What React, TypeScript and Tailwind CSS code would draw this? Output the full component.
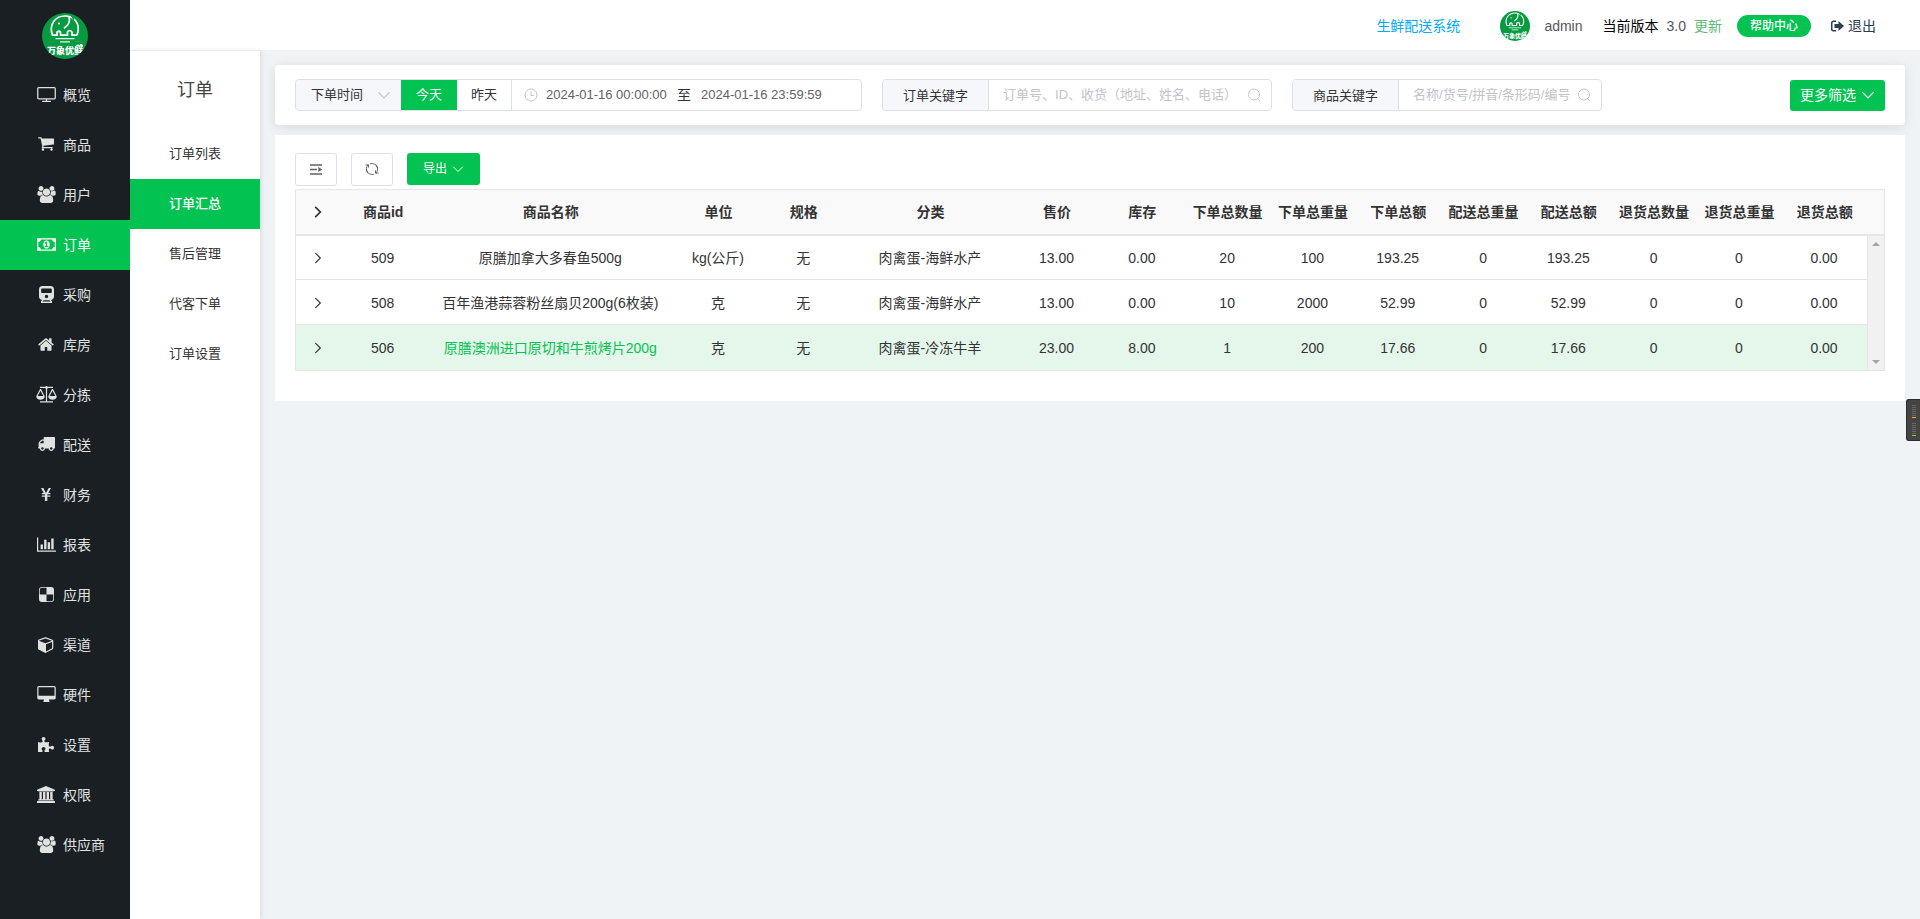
import { useState, type ReactNode } from "react";

type GlyphProps = { viewBox: string; className?: string; children: ReactNode };

function Glyph({ viewBox, className, children }: GlyphProps) {
  return (
    <svg viewBox={viewBox} className={className} fill="currentColor" aria-hidden="true">
      {children}
    </svg>
  );
}

const PEOPLE =
  "M657 896q-162 5-265 128h-134q-82 0-138-40.5t-56-118.5q0-353 124-353 6 0 43.5 21t97.5 42.5 119 21.5q67 0 133-23-5 37-5 66 0 159 93 293zm1071 637q0 120-73 189.5t-194 69.5h-874q-121 0-194-69.5t-73-189.5q0-53 3.5-103.5t14-109 26.5-108.5 43-97.5 62-81 85.5-53.5 111.5-20q10 0 43 21.5t73 48 107 48 135 21.5 135-21.5 107-48 73-48 43-21.5q61 0 111.5 20t85.5 53.5 62 81 43 97.5 26.5 108.5 14 109 3.5 103.5zm-1024-1277q0 106-75 181t-181 75-181-75-75-181 75-181 181-75 181 75 75 181zm704 384q0 159-112.5 271.5t-271.5 112.5-271.5-112.5-112.5-271.5 112.5-271.5 271.5-112.5 271.5 112.5 112.5 271.5zm576 225q0 78-56 118.5t-138 40.5h-134q-103-123-265-128 93-134 93-293 0-29-5-66 66 23 133 23 59 0 119-21.5t97.5-42.5 43.5-21q124 0 124 353zm-128-609q0 106-75 181t-181 75-181-75-75-181 75-181 181-75 181 75 75 181z";

const people = (
  <Glyph viewBox="64 0 1920 1792" className="h-[17px] w-[19px]">
    <path d={PEOPLE} />
  </Glyph>
);

const MENU: { label: string; icon: ReactNode }[] = [
  {
    label: "概览",
    icon: (
      <Glyph viewBox="0 128 1920 1536" className="h-[15px] w-[19px]">
        <path d="M1792 288v960q0 13-9.5 22.5t-22.5 9.5h-1600q-13 0-22.5-9.5t-9.5-22.5v-960q0-13 9.5-22.5t22.5-9.5h1600q13 0 22.5 9.5t9.5 22.5zm128 960v-960q0-66-47-113t-113-47h-1600q-66 0-113 47t-47 113v960q0 66 47 113t113 47h736v128h-352q-14 0-23 9t-9 23v64q0 14 9 23t23 9h832q14 0 23-9t9-23v-64q0-14-9-23t-23-9h-352v-128h736q66 0 113-47t47-113z" />
      </Glyph>
    ),
  },
  {
    label: "商品",
    icon: (
      <Glyph viewBox="64 256 1664 1408" className="h-[14px] w-[16px]">
        <path d="M704 1536q0 52-38 90t-90 38-90-38-38-90 38-90 90-38 90 38 38 90zm896 0q0 52-38 90t-90 38-90-38-38-90 38-90 90-38 90 38 38 90zm128-1088v512q0 24-16.5 42.5t-40.5 21.5l-1044 122q13 60 13 70 0 16-24 64h920q26 0 45 19t19 45-19 45-45 19h-1024q-26 0-45-19t-19-45q0-11 8-31.5t16-36 21.5-40 15.5-29.5l-177-823h-204q-26 0-45-19t-19-45 19-45 45-19h256q16 0 28.5 6.5t19.5 15.5 13 24.5 8 26 5.5 29.5 4.5 26h1201q26 0 45 19t19 45z" />
      </Glyph>
    ),
  },
  { label: "用户", icon: people },
  {
    label: "订单",
    icon: (
      <Glyph viewBox="0 0 1920 1280" className="h-[13px] w-[19px]">
        <path d="M768 896h384v-96h-128v-448h-114l-148 137 77 80q42-37 55-57h2v288h-128v96zm512-256q0 70-21 142t-59.5 134-101.5 101-138 39-138-39-101.5-101-59.5-134-21-142 21-142 59.5-134 101.5-101 138-39 138 39 101.5 101 59.5 134 21 142zm512 256v-512q-106 0-181-75t-75-181h-1152q0 106-75 181t-181 75v512q106 0 181 75t75 181h1152q0-106 75-181t181-75zm128-832v1152q0 26-19 45t-45 19h-1792q-26 0-45-19t-19-45v-1152q0-26 19-45t45-19h1792q26 0 45 19t19 45z" />
      </Glyph>
    ),
  },
  {
    label: "采购",
    icon: (
      <Glyph viewBox="0 0 15 17" className="h-[17px] w-[15px]">
        <path
          fillRule="evenodd"
          d="M3.5 0h8A3.5 3.5 0 0 1 15 3.5v7a3.5 3.5 0 0 1-3 3.4L13.300 16H13v1H2v-1h-.3L3 13.900a3.500 3.500 0 0 1-3-3.400v-7A3.500 3.500 0 0 1 3.500 0ZM3 2.500a.8.800 0 0 0-.8.800v2.900c0 .4.300.800.800.800h9c.4 0 .8-.4.800-.8V3.300a.8.800 0 0 0-.8-.8H3Zm4.500 6.300a1.700 1.700 0 1 0 0 3.400 1.700 1.700 0 0 0 0-3.400ZM4.500 14.200l-1 1.400h8l-1-1.400h-6Z"
        />
      </Glyph>
    ),
  },
  {
    label: "库房",
    icon: (
      <Glyph viewBox="64 253 1664 1283" className="h-[13px] w-[16px]">
        <path d="M1472 992v480q0 26-19 45t-45 19h-384v-384h-256v384h-384q-26 0-45-19t-19-45v-480q0-1 .5-3t.5-3l575-474 575 474q1 2 1 6zm223-69l-62 74q-8 9-21 11h-3q-13 0-21-7l-692-577-692 577q-12 8-24 7-13-2-21-11l-62-74q-8-10-7-23.5t11-21.5l719-599q32-26 76-26t76 26l244 204v-195q0-14 9-23t23-9h192q14 0 23 9t9 23v408l219 182q10 8 11 21.500t-7 23.500z" />
      </Glyph>
    ),
  },
  {
    label: "分拣",
    icon: (
      <Glyph viewBox="0 0 21 17" className="h-[17px] w-[21px]">
        <path d="M10.500 0a1.300 1.300 0 0 1 1.200.8H17v1.200h-5.200a1.500 1.500 0 0 1-.7.7v12.500H17v1.300H4v-1.300h5.900V2.700a1.500 1.500 0 0 1-.7-.7H4V.8h5.300A1.300 1.300 0 0 1 10.500 0Z" />
        <path
          fillRule="evenodd"
          d="M4 3h1l3.700 7.200c.2 2-1.700 3.500-4.200 3.500S.1 12.200.3 10.200L4 3Zm.5 1.800L1.700 10h5.600L4.500 4.800ZM16 3h1l3.700 7.200c.2 2-1.700 3.500-4.200 3.500s-4.400-1.500-4.200-3.500L16 3Zm.5 1.800L13.700 10h5.600l-2.800-5.200Z"
        />
      </Glyph>
    ),
  },
  {
    label: "配送",
    icon: (
      <Glyph viewBox="64 256 1728 1408" className="h-[14px] w-[17px]">
        <path d="M640 1408q0-52-38-90t-90-38-90 38-38 90 38 90 90 38 90-38 38-90zm-384-512h384v-256h-158q-13 0-22 9l-195 195q-9 9-9 22v30zm1280 512q0-52-38-90t-90-38-90 38-38 90 38 90 90 38 90-38 38-90zm256-1088v1024q0 15-4 26.500t-13.500 18.500-16.500 11.500-23.500 6-22.500 2-25.500 0-22.500-.5q0 106-75 181t-181 75-181-75-75-181h-384q0 106-75 181t-181 75-181-75-75-181h-64q-3 0-22.500.5t-25.500 0-22.500-2-23.500-6-16.500-11.500-13.500-18.500-4-26.500q0-26 19-45t45-19v-320q0-8-.5-35t0-38 2.500-34.500 6.500-37 14-30.500 22.500-30l198-198q19-19 50.500-32t58.500-13h160v-192q0-26 19-45t45-19h1024q26 0 45 19t19 45z" />
      </Glyph>
    ),
  },
  {
    label: "财务",
    icon: (
      <Glyph viewBox="0 0 10 13" className="h-[13px] w-[10px]">
        <path d="M0 0h2.300L5 4.900 7.700 0H10L7.300 5H9.400v1.300H6.300v1.200h3.100v1.300H6.300V13H3.900V8.800H.8V7.500h3.100V6.300H.8V5h1.900L0 0Z" />
      </Glyph>
    ),
  },
  {
    label: "报表",
    icon: (
      <Glyph viewBox="0 128 2048 1536" className="h-[15px] w-[19px]">
        <path d="M640 896v512h-256v-512h256zm384-512v1024h-256v-1024h256zm1024 1152v128h-2048v-1536h128v1408h1920zm-640-896v768h-256v-768h256zm384-384v1152h-256v-1152h256z" />
      </Glyph>
    ),
  },
  {
    label: "应用",
    icon: (
      <Glyph viewBox="0 0 15 15" className="h-[15px] w-[15px]">
        <path
          fillRule="evenodd"
          d="M3 0h9a3 3 0 0 1 3 3v9a3 3 0 0 1-3 3H3a3 3 0 0 1-3-3V3a3 3 0 0 1 3-3Zm0 .8A2.200 2.200 0 0 0 .8 3v4.500h6.700V.8H3Zm4.500 6.700v6.700H12a2.200 2.200 0 0 0 2.200-2.200V7.500H7.500Z"
        />
      </Glyph>
    ),
  },
  {
    label: "渠道",
    icon: (
      <Glyph viewBox="0 0 1664 1792" className="h-[17px] w-[16px]">
        <path d="M832 1629l640-349v-636l-640 233v752zm-64-865l698-254-698-254-698 254zm832-252v768q0 35-18 65t-49 47l-704 384q-28 16-61 16t-61-16l-704-384q-31-17-49-47t-18-65v-768q0-40 23-73t61-47l704-256q22-8 44-8t44 8l704 256q38 14 61 47t23 73z" />
      </Glyph>
    ),
  },
  {
    label: "硬件",
    icon: (
      <Glyph viewBox="-64 0 1920 1664" className="h-[16px] w-[19px]">
        <path d="M1728 992v-832q0-13-9.500-22.500t-22.500-9.500h-1600q-13 0-22.500 9.500t-9.500 22.500v832q0 13 9.500 22.500t22.500 9.500h1600q13 0 22.500-9.500t9.500-22.500zm128-832v1088q0 66-47 113t-113 47h-544q0 37 16 77.500t32 71 16 43.500q0 26-19 45t-45 19h-512q-26 0-45-19t-19-45q0-14 16-44t32-70 16-78h-544q-66 0-113-47t-47-113v-1088q0-66 47-113t113-47h1600q66 0 113 47t47 113z" />
      </Glyph>
    ),
  },
  {
    label: "设置",
    icon: (
      <Glyph viewBox="64 0 1664 1536" className="h-[15px] w-[16px]">
        <path d="M1728 1098q0 81-44.500 135t-123.500 54q-41 0-77.500-17.500t-59-38-56.500-38-71-17.500q-110 0-110 124 0 39 16 115t15 115v5q-22 0-33 1-34 3-97.500 11.500t-115.500 13.500-98 5q-61 0-103-26.500t-42-83.500q0-37 17.500-71t38-56.500 38-59 17.500-77.500q0-79-54-123.500t-135-44.500q-84 0-143 45.500t-59 127.500q0 43 15 83t33.500 64.500 33.500 53 15 50.500q0 45-46 89-37 35-117 35-95 0-245-24-9-2-27.500-4t-27.500-4l-13-2q-1 0-3-1-2 0-2-1v-1024q2 1 17.500 3.500t34 5 21.500 3.500q150 24 245 24 80 0 117-35 46-44 46-89 0-22-15-50.500t-33.500-53-33.500-64.500-15-83q0-82 59-127.500t144-45.500q80 0 134 44.500t54 123.500q0 41-17.500 77.500t-38 59-38 56.500-17.500 71q0 57 42 83.500t103 26.500q64 0 180-15t163-17v2q-1 2-3.500 17.500t-5 34-3.500 21.500q-24 150-24 245 0 80 35 117 44 46 89 46 22 0 50.500-15t53-33.500 64.500-33.500 83-15q82 0 127.500 59t45.500 143z" />
      </Glyph>
    ),
  },
  {
    label: "权限",
    icon: (
      <Glyph viewBox="0 0 1920 1792" className="h-[17px] w-[18px]">
        <path d="M960 0l960 384v128h-128q0 26-20.500 45t-48.500 19h-1526q-28 0-48.500-19t-20.500-45h-128v-128zm-704 640h256v768h128v-768h256v768h128v-768h256v768h128v-768h256v768h59q28 0 48.500 19t20.500 45v64h-1664v-64q0-26 20.500-45t48.500-19h59v-768zm1595 960q28 0 48.500 19t20.500 45v128h-1920v-128q0-26 20.500-45t48.500-19h1782z" />
      </Glyph>
    ),
  },
  { label: "供应商", icon: people },
];

const SUBMENU = ["订单列表", "订单汇总", "售后管理", "代客下单", "订单设置"];

const HEADS = [
  "商品id", "商品名称", "单位", "规格", "分类", "售价", "库存", "下单总数量", "下单总重量",
  "下单总额", "配送总重量", "配送总额", "退货总数量", "退货总重量", "退货总额",
];

const ROWS = [
  ["509", "原膳加拿大多春鱼500g", "kg(公斤)", "无", "肉禽蛋-海鲜水产", "13.00", "0.00", "20", "100", "193.25", "0", "193.25", "0", "0", "0.00"],
  ["508", "百年渔港蒜蓉粉丝扇贝200g(6枚装)", "克", "无", "肉禽蛋-海鲜水产", "13.00", "0.00", "10", "2000", "52.99", "0", "52.99", "0", "0", "0.00"],
  ["506", "原膳澳洲进口原切和牛煎烤片200g", "克", "无", "肉禽蛋-冷冻牛羊", "23.00", "8.00", "1", "200", "17.66", "0", "17.66", "0", "0", "0.00"],
];

function Logo({ className }: { className: string }) {
  return (
    <svg viewBox="0 0 46 46" className={className} role="img" aria-label="万象优鲜">
      <defs>
        <clipPath id="badge">
          <circle cx="23" cy="23" r="23" />
        </clipPath>
      </defs>
      <g clipPath="url(#badge)">
        <rect width="46" height="46" fill="#069a41" />
        <g fill="none" stroke="#fff" strokeWidth="1.700" strokeLinecap="round" strokeLinejoin="round">
          <path d="M10.500 22.200C6.500 12 13 3 23 3c9.500 0 15 8 12.800 16.500-.3 1.200-.7 2.200-1.300 2.700H30v-3.200q-2.500-3-4.500 0v3.200h-7v-3.200q-1.500-1.500-3.500 0v3.200h-4.500Z" />
          <path d="M27 4c1.500 5-1 8.500-4.500 10.800" />
        </g>
        <path d="M29.500 2.500l2.500 4" stroke="#069a41" strokeWidth="1.500" />
        <path d="M13.500 25.700h19M18 28.900h10" fill="none" stroke="#e5f5eb" strokeWidth="1.300" />
        <circle cx="17" cy="10.500" r="1.100" fill="#fff" />
        <text
          x="23" y="41" textAnchor="middle" fill="#fff" fontSize="9" fontWeight="900"
          fontFamily="'Noto Sans CJK SC', sans-serif"
        >
          万象优鲜
        </text>
        <path d="M34 33.500c0-2 2.500-3 3.500-1 1-2.500 4-1.500 3.500 1z" fill="#fff" />
      </g>
    </svg>
  );
}

function Chevron({ dir = "down", className }: { dir?: "down" | "right"; className: string }) {
  return (
    <svg viewBox="0 0 12 12" className={className} fill="none" stroke="currentColor" strokeLinecap="round" aria-hidden="true">
      <path d={dir === "down" ? "M1.500 4 6 8.500 10.500 4" : "M4 2 8 6 4 10"} />
    </svg>
  );
}

function KeywordSearch({ id, label, placeholder, className }: { id: string; label: string; placeholder: string; className: string }) {
  return (
    <div className={`flex h-8 overflow-hidden rounded border border-[#dcdfe6] ${className}`}>
      <label htmlFor={id} className="flex shrink-0 items-center border-r border-[#dcdfe6] bg-[#f5f7fa] px-5 pt-0.5 text-[13px] text-[#333]">
        {label}
      </label>
      <input
        id={id}
        placeholder={placeholder}
        className="min-w-0 flex-1 bg-white pl-[14px] text-[13px] text-[#606266] outline-none placeholder:text-[#c0c4cc]"
      />
      <button aria-label={`搜索${label}`} className="flex w-6 shrink-0 items-center text-[#c0c4cc]">
        <svg viewBox="0 0 14 14" className="size-[14px]" fill="none" stroke="currentColor" strokeLinecap="round">
          <circle cx="7" cy="6.500" r="5.500" />
          <path d="m10.500 10.500 2.200 2.200" />
        </svg>
      </button>
    </div>
  );
}

function TopBar() {
  return (
    <header className="flex h-[50px] shrink-0 items-center justify-end bg-white pt-[2px] pr-[44px] text-sm whitespace-nowrap">
      <a href="#system" className="text-[#03a9f4]">生鲜配送系统</a>
      <Logo className="ml-10 size-[30px]" />
      <span className="ml-[14px] text-[#555]">admin</span>
      <span className="ml-5 text-black">当前版本</span>
      <span className="ml-2 text-[#555]">3.0</span>
      <a href="#update" className="ml-2 text-[#5fb878]">更新</a>
      <button className="ml-[15px] h-[22px] rounded-full bg-[#02c351] px-[13px] text-xs font-medium text-white">帮助中心</button>
      <button className="ml-5 flex items-center gap-1 text-[#2d3e53]">
        <svg viewBox="0 0 13 12" className="h-3 w-[13px]" fill="currentColor" aria-hidden="true">
          <path d="M5 .5V2H2.500a1 1 0 0 0-1 1v6a1 1 0 0 0 1 1H5v1.500H2.500A2.500 2.500 0 0 1 0 9V3A2.500 2.500 0 0 1 2.500.500H5Z" />
          <path d="M7.500 1 13 6l-5.500 5V8H3.500V4h4V1Z" />
        </svg>
        退出
      </button>
    </header>
  );
}

function Filters() {
  const [day, setDay] = useState("今天");
  return (
    <section className="flex h-[60px] items-center rounded bg-white px-5 shadow-[0_2px_12px_rgba(0,0,0,0.1)]">
      <div className="flex h-8 w-[567px] overflow-hidden rounded border border-[#dcdfe6] text-[13px]">
        <div className="relative w-[105px]">
          <select aria-label="时间类型" className="h-full w-full appearance-none bg-[#f5f7fa] pl-[15px] text-[#333] outline-none">
            <option>下单时间</option>
          </select>
          <Chevron className="pointer-events-none absolute top-2 right-[10px] size-[14px] text-[#c0c4cc]" />
        </div>
        {["今天", "昨天"].map((d) => (
          <button
            key={d}
            onClick={() => setDay(d)}
            className={day === d ? "-my-px w-14 bg-[#02c351] text-white" : "w-[55px] border-r border-[#dcdfe6] text-[#333]"}
          >
            {d}
          </button>
        ))}
        <div className="flex flex-1 items-center pl-3 text-[#606266]">
          <svg viewBox="0 0 14 14" className="size-[14px] shrink-0 text-[#c0c4cc]" fill="none" stroke="currentColor" aria-hidden="true">
            <circle cx="7" cy="7" r="6" />
            <path d="M7 3.500V7.500h3" />
          </svg>
          <input aria-label="开始时间" defaultValue="2024-01-16 00:00:00" className="ml-2 w-[123px] outline-none" />
          <span className="ml-2 text-sm text-[#303133]">至</span>
          <input aria-label="结束时间" defaultValue="2024-01-16 23:59:59" className="ml-[10px] w-[123px] outline-none" />
        </div>
      </div>
      <KeywordSearch id="order-keyword" label="订单关键字" placeholder="订单号、ID、收货（地址、姓名、电话）" className="ml-5 w-[390px]" />
      <KeywordSearch id="goods-keyword" label="商品关键字" placeholder="名称/货号/拼音/条形码/编号" className="ml-5 w-[310px]" />
      <button className="ml-auto flex h-[31px] items-center gap-[5px] rounded-[3px] bg-[#02c351] px-[10px] text-sm text-white">
        更多筛选
        <Chevron className="size-[14px]" />
      </button>
    </section>
  );
}

function GoodsTable() {
  return (
    <table className="w-full table-fixed border-collapse border border-[#e6e6e6] text-center text-sm text-[#333]">
      <colgroup>
        <col className="w-[45px]" />
        <col />
        <col className="w-[250px]" />
        <col />
        <col />
        <col className="w-[168px]" />
        {HEADS.slice(5).map((h) => <col key={h} />)}
        <col className="w-[17px]" />
      </colgroup>
      <thead>
        <tr className="h-[45px] border-b-2 border-[#e6e6e6] bg-[#f9f9f9]">
          <th>
            <button aria-label="展开全部" className="block w-full"><Chevron dir="right" className="mx-auto size-[14px] stroke-[1.5]" /></button>
          </th>
          {HEADS.map((h) => <th key={h} className="font-bold whitespace-nowrap">{h}</th>)}
          <th aria-hidden="true" />
        </tr>
      </thead>
      <tbody>
        {ROWS.map((row, i) => (
          <tr key={row[0]} className="h-[45px] border-b border-[#e6e6e6]">
            <td className={`pt-0.5 ${i === 2 ? "bg-[#e5f7eb]" : ""}`}>
              <button aria-label={`展开${row[0]}`} className="block w-full"><Chevron dir="right" className="mx-auto size-[14px]" /></button>
            </td>
            {row.map((cell, c) => (
              <td key={HEADS[c]} className={`pt-0.5 pr-px whitespace-nowrap ${i === 2 ? "bg-[#e5f7eb]" : ""} ${i === 2 && c === 1 ? "text-[#02c351]" : ""}`}>
                {cell}
              </td>
            ))}
            {i === 0 && (
              <td rowSpan={3} className="border-l border-[#e6e6e6] bg-[#f1f1f1] p-0" aria-hidden="true">
                <div className="flex h-[134px] flex-col items-center justify-between py-[6px] text-[#a3a3a3]">
                  <svg viewBox="0 0 8 4" className="h-1 w-2" fill="currentColor"><path d="M0 4 4 0l4 4z" /></svg>
                  <svg viewBox="0 0 8 4" className="h-1 w-2" fill="currentColor"><path d="m0 0 4 4 4-4z" /></svg>
                </div>
              </td>
            )}
          </tr>
        ))}
      </tbody>
    </table>
  );
}

function LevelMeter({ lit }: { lit: string }) {
  return (
    <div className="flex flex-col gap-px">
      {[0, 1, 2, 3, 4, 5].map((n) => <span key={n} className="h-px w-1 bg-[#666]" />)}
      <span className={`h-px w-1 ${lit}`} />
    </div>
  );
}

export default function App() {
  const [section, setSection] = useState("订单");
  const [page, setPage] = useState("订单汇总");
  return (
    <div className="flex min-h-screen bg-[#eff3f6] font-['Liberation_Sans','Noto_Sans_CJK_SC',sans-serif]">
      <aside className="flex w-[130px] shrink-0 flex-col bg-[#191f22]">
        <div className="flex h-[70px] justify-center pt-[13px]">
          <Logo className="size-[46px]" />
        </div>
        <nav aria-label="主菜单">
          {MENU.map(({ label, icon }) => (
            <button
              key={label}
              onClick={() => setSection(label)}
              className={`flex h-[50px] w-full items-center pl-[35px] text-sm ${section === label ? "bg-[#02c351] text-white" : "text-[#e0e2e2]"}`}
            >
              <span className="mr-[6px] flex w-[22px] shrink-0 justify-center pb-0.5">{icon}</span>
              {label}
            </button>
          ))}
        </nav>
      </aside>

      <div className="flex min-w-0 flex-1 flex-col">
        <TopBar />
        <div className="flex flex-1">
          <aside className="w-[130px] shrink-0 border-t border-[#ebebeb] bg-white shadow-[2px_0_4px_rgba(0,0,0,0.08)]">
            <h2 className="flex h-[78px] items-center justify-center text-lg text-[#444]">订单</h2>
            <nav aria-label="订单">
              {SUBMENU.map((item) => (
                <button
                  key={item}
                  onClick={() => setPage(item)}
                  className={`block h-[50px] w-full pb-px text-[13px] ${page === item ? "bg-[#02c351] font-medium text-white" : "text-[#333]"}`}
                >
                  {item}
                </button>
              ))}
            </nav>
          </aside>

          <main className="flex min-w-0 flex-1 flex-col gap-[10px] p-[15px]">
            <Filters />
            <section className="bg-white px-5 pt-[18px] pb-[30px]">
              <div className="mb-[3px] flex gap-[14px]">
                <button aria-label="列设置" className="flex h-[33px] w-[42px] items-center justify-center rounded-[3px] border border-[#dcdfe6] pb-0.5 text-[#606266]">
                  <svg viewBox="0 0 14 14" className="size-[14px]" fill="none" stroke="currentColor" strokeWidth="1.700">
                    <path d="M1 3h12M1 7.500h7M1 12h12" />
                    <path d="M9.300 4.900v5.200l4-2.600z" fill="currentColor" stroke="none" />
                  </svg>
                </button>
                <button aria-label="刷新" className="flex h-[33px] w-[42px] items-center justify-center rounded-[3px] border border-[#dcdfe6] pb-0.5 text-[#606266]">
                  <svg viewBox="0 0 14 14" className="size-[14px]" fill="none" stroke="currentColor" strokeLinecap="round">
                    <path d="M2.800 11A5.600 5.600 0 0 1 3 2.900M5.500 1.600a5.600 5.600 0 0 1 7 4.200M11.200 3a5.600 5.600 0 0 1-.2 8.100M8.500 12.400a5.600 5.600 0 0 1-7-4.200" />
                    <path d="M1 2.900h2.500v2.300M13 11.100h-2.500V8.800" />
                  </svg>
                </button>
                <button className="flex h-8 w-[73px] items-center justify-center gap-[5px] rounded-[3px] bg-[#02c351] text-xs text-white">
                  导出
                  <Chevron className="size-3" />
                </button>
              </div>
              <GoodsTable />
            </section>
          </main>
        </div>
      </div>

      <div className="fixed top-[399px] right-0 flex h-[42px] w-[14px] flex-col items-center justify-center gap-[5px] rounded-l-[3px] border border-r-0 border-[#2b2b2b] bg-[#444]" aria-hidden="true">
        <LevelMeter lit="bg-[#f5a623]" />
        <LevelMeter lit="bg-[#7ed321]" />
      </div>
    </div>
  );
}
